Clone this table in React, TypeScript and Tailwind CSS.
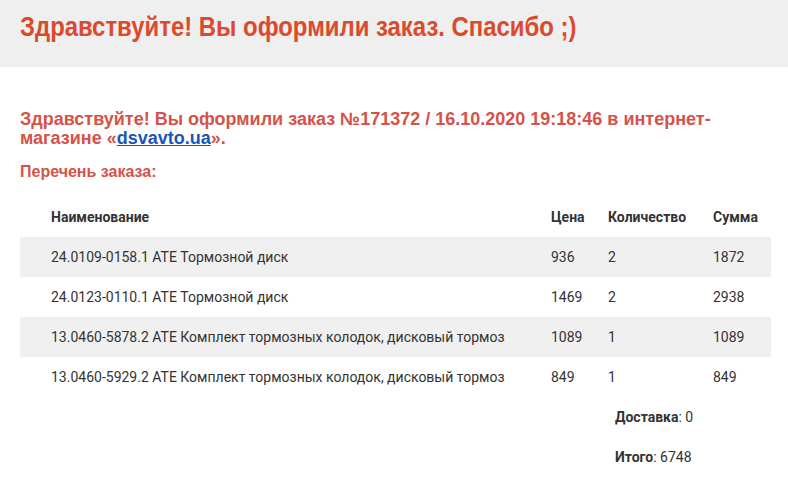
const items = [
  { name: "24.0109-0158.1 ATE Тормозной диск", price: 936, qty: 2, sum: 1872 },
  { name: "24.0123-0110.1 ATE Тормозной диск", price: 1469, qty: 2, sum: 2938 },
  { name: "13.0460-5878.2 ATE Комплект тормозных колодок, дисковый тормоз", price: 1089, qty: 1, sum: 1089 },
  { name: "13.0460-5929.2 ATE Комплект тормозных колодок, дисковый тормоз", price: 849, qty: 1, sum: 849 },
];

const cols = "grid grid-cols-[521px_57px_105px_68px]";

export default function App() {
  return (
    <div className="min-h-[487px] bg-white">
      <header className="h-[67px] bg-[#efefef] pl-5 pt-[12px]">
        <h1 className="inline-block origin-left scale-x-[0.885] whitespace-nowrap font-['Liberation_Sans',Arial,sans-serif] text-[27px] font-bold leading-[30px] text-[#dc4a2e]">
          Здравствуйте! Вы оформили заказ. Спасибо ;)
        </h1>
      </header>

      <main className="px-5 pt-[43px] font-['Liberation_Sans',Arial,sans-serif]">
        <h2 className="text-[18px] font-bold leading-[19px] text-[#d65249]">
          Здравствуйте! Вы оформили заказ №171372 / 16.10.2020 19:18:46 в интернет-
          <br />
          магазине «
          <a href="#" className="text-[#1a56b8] underline">
            dsvavto.ua
          </a>
          ».
        </h2>
        <p className="mt-[15px] text-[16px] font-bold leading-[18px] text-[#d65249]">Перечень заказа:</p>

        <div className="mt-[16px] w-[751px] font-['Roboto',sans-serif] text-[14px] text-[#333]">
          <div className={`${cols} h-10 items-center font-bold`}>
            <div className="pl-[31px]">Наименование</div>
            <div className="pl-[10px]">Цена</div>
            <div className="pl-[10px]">Количество</div>
            <div className="pl-[10px]">Сумма</div>
          </div>
          {items.map((it, i) => (
            <div key={it.name} className={`${cols} h-10 items-center ${i % 2 === 0 ? "bg-[#f0f0f0]" : ""}`}>
              <div className="pl-[31px]">{it.name}</div>
              <div className="pl-[10px]">{it.price}</div>
              <div className="pl-[10px]">{it.qty}</div>
              <div className="pl-[10px]">{it.sum}</div>
            </div>
          ))}
          <div className="flex h-10 items-center pl-[595px]">
            <span>
              <b>Доставка</b>: 0
            </span>
          </div>
          <div className="flex h-10 items-center pl-[595px]">
            <span>
              <b>Итого</b>: 6748
            </span>
          </div>
        </div>
      </main>
    </div>
  );
}
